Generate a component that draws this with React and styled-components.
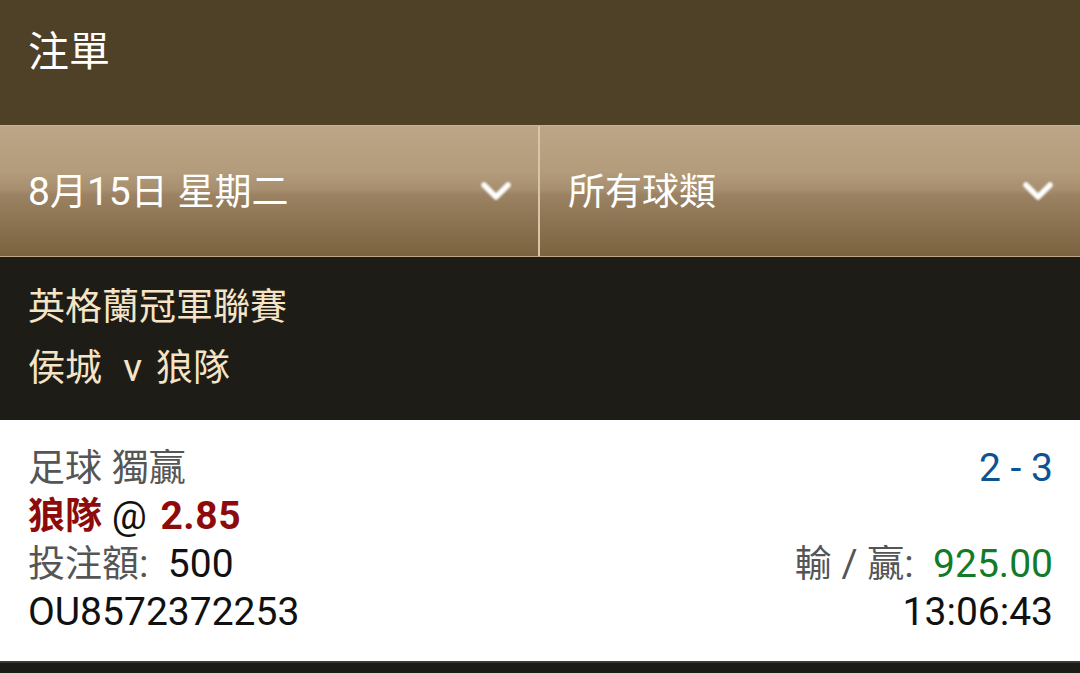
import React from "react";
import styled, { createGlobalStyle } from "styled-components";

const Global = createGlobalStyle`
  html, body { margin: 0; padding: 0; background: #1d1b16; }
  body { font-family: Roboto, "Noto Sans CJK TC", sans-serif; }
`;

const Page = styled.div`
  width: 1080px;
  height: 673px;
  display: flex;
  flex-direction: column;
  background: #1d1b16;
  overflow: hidden;
`;

const Header = styled.header`
  height: 125px;
  background: #4f4028;
  display: flex;
  align-items: flex-start;
  padding: 22px 28px 0;
  box-sizing: border-box;
`;

const Title = styled.h1`
  margin: 0;
  font-family: "Noto Sans CJK TC", sans-serif;
  font-weight: 400;
  font-size: 41px;
  line-height: 52px;
  color: #ffffff;
`;

const FilterBar = styled.div`
  height: 132px;
  display: grid;
  grid-template-columns: 538px 2px 1fr;
  border-top: 1px solid #c8b293;
  border-bottom: 1px solid #c0a988;
  box-sizing: border-box;
  background: linear-gradient(
    to bottom,
    #bca687 0%,
    #b39c7c 35%,
    #a68e6e 49%,
    #9a8262 53%,
    #8b7352 75%,
    #7b623f 100%
  );
`;

const Divider = styled.div`
  background: #d9c4a6;
`;

const Select = styled.div`
  display: flex;
  align-items: center;
  justify-content: space-between;
  padding: 3px 26px 0 28px;
  color: #ffffff;
  font-size: 37px;
  line-height: 48px;
`;

const Chevron = styled.svg`
  width: 32px;
  height: 22px;
  margin-top: -3px;
  filter: blur(0.8px);
`;

const League = styled.section`
  height: 163px;
  background: #1e1c17;
  padding: 21px 28px 0;
  box-sizing: border-box;
  color: #f6e4c6;
  font-size: 37px;
  line-height: 60px;
`;

const Line = styled.div`
  white-space: pre;
`;

/* Latin digits and letters run a little larger than the CJK glyphs */
const Latin = styled.span`
  font-size: 39px;
`;

const Versus = styled(Latin)`
  margin: 0 4px 0 2px;
`;

const Card = styled.section`
  height: 241px;
  background: #ffffff;
  padding: 24px 27px 0 28px;
  box-sizing: border-box;
  display: flex;
  justify-content: space-between;
  font-size: 37px;
  line-height: 48px;
`;

const Column = styled.div`
  display: flex;
  flex-direction: column;
  align-items: ${(p) => (p.$right ? "flex-end" : "flex-start")};
`;

const Row = styled.div`
  height: 48px;
  white-space: pre;
  color: ${(p) => p.$color || "#111111"};
`;

const Span = styled.span`
  color: ${(p) => p.$color};
  font-weight: ${(p) => (p.$bold ? 700 : 400)};
  font-size: ${(p) => (p.$latin ? "39px" : "inherit")};
`;

const Odds = styled(Span)`
  margin-left: 4px;
  letter-spacing: 0.6px;
`;

const Footer = styled.div`
  flex: 1;
  background: #1d1b16;
  border-top: 2px solid #3a3834;
`;

function ChevronDown() {
  return (
    <Chevron viewBox="0 0 32 22">
      <polyline
        points="4,5 16,17 28,5"
        fill="none"
        stroke="#ffffff"
        strokeWidth="5.5"
        strokeLinecap="round"
        strokeLinejoin="round"
      />
    </Chevron>
  );
}

export default function App() {
  return (
    <Page>
      <Global />
      <Header>
        <Title>注單</Title>
      </Header>
      <FilterBar>
        <Select>
          <span>
            <Latin>8</Latin>月<Latin>15</Latin>日<Latin> </Latin>星期二
          </span>
          <ChevronDown />
        </Select>
        <Divider />
        <Select>
          <span>所有球類</span>
          <ChevronDown />
        </Select>
      </FilterBar>
      <League>
        <Line>英格蘭冠軍聯賽</Line>
        <Line>
          侯城<Versus>  v </Versus>狼隊
        </Line>
      </League>
      <Card>
        <Column>
          <Row $color="#555555">
            足球<Latin> </Latin>獨贏
          </Row>
          <Row>
            <Span $color="#8e0b0b" $bold>狼隊</Span>
            <Span $color="#111111" $latin> @ </Span>
            <Odds $color="#8e0b0b" $bold $latin>2.85</Odds>
          </Row>
          <Row>
            <Span $color="#555555">投注額</Span>
            <Span $color="#555555" $latin>:  </Span>
            <Span $color="#111111" $latin>500</Span>
          </Row>
          <Row>
            <Latin>OU8572372253</Latin>
          </Row>
        </Column>
        <Column $right>
          <Row $color="#0b5394">
            <Latin>2 - 3</Latin>
          </Row>
          <Row />
          <Row>
            <Span $color="#555555">輸</Span>
            <Span $color="#555555" $latin> / </Span>
            <Span $color="#555555">贏</Span>
            <Span $color="#555555" $latin>:  </Span>
            <Span $color="#137a2a" $latin>925.00</Span>
          </Row>
          <Row>
            <Latin>13:06:43</Latin>
          </Row>
        </Column>
      </Card>
      <Footer />
    </Page>
  );
}
